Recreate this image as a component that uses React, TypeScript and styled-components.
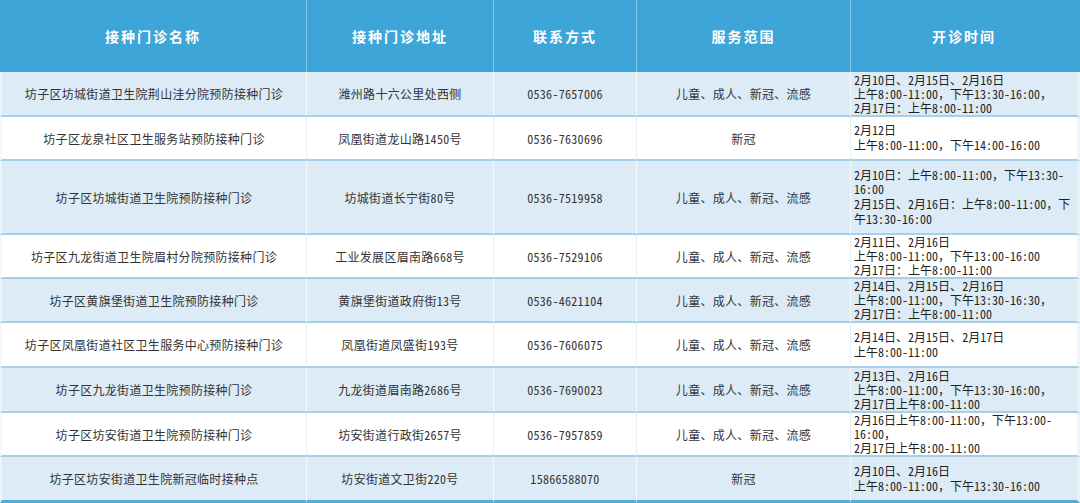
import React from "react";
import styled, { createGlobalStyle } from "styled-components";

const GlobalStyle = createGlobalStyle`
  html, body {
    margin: 0;
    padding: 0;
    background: #ffffff;
  }
  body {
    font-family: "Noto Sans CJK SC", "Noto Sans", sans-serif;
  }
`;

const Table = styled.table`
  width: 1080px;
  table-layout: fixed;
  border-collapse: separate;
  border-spacing: 0;
  font-family: "Noto Sans CJK SC", "Noto Sans", sans-serif;
`;

const Col = styled.col<{ $w: number }>`
  width: ${(p) => p.$w}px;
`;

const HeadRow = styled.tr`
  height: 72px;
`;

const HeadCell = styled.th`
  background: #3ea5d8;
  color: #ffffff;
  font-size: 14px;
  font-weight: 700;
  letter-spacing: 2px;
  text-align: center;
  vertical-align: middle;
  padding: 0;
  border-right: 1px solid #86c6e8;
  &:last-child {
    border-right: 3px solid #3ea5d8;
  }
`;

const Row = styled.tr<{ $h: number; $alt: boolean }>`
  height: ${(p) => p.$h}px;
  background: ${(p) => (p.$alt ? "#dcebf6" : "#ffffff")};
`;

const Cell = styled.td<{ $alt: boolean; $last: boolean }>`
  font-size: 12px;
  letter-spacing: 0.3px;
  color: #333333;
  text-align: center;
  vertical-align: middle;
  padding: 0 2px;
  white-space: nowrap;
  border-right: 1px solid ${(p) => (p.$alt ? "#f3f8fc" : "#e3edf4")};
  border-bottom: ${(p) => (p.$last ? "3px solid #56acd9" : "2px solid #a7cfe8")};
  &:first-child {
    border-left: 2px solid ${(p) => (p.$alt ? "#eaf4fa" : "#f3f8fb")};
  }
`;

const TimeCell = styled(Cell)`
  text-align: left;
  letter-spacing: 0;
  color: #1f1f1f;
  padding: 0 2px 0 3px;
  line-height: 14px;
  border-right: 3px solid ${(p) => (p.$alt ? "#e6f1f8" : "#eef5fa")};
`;

const Line = styled.div<{ $gap: boolean }>`
  display: block;
  line-height: ${(p) => (p.$gap ? "14.7px" : "14px")};
`;

const Half = styled.span`
  font-feature-settings: "hwid";
`;

function Mixed({ text }: { text: string }) {
  const parts = text.match(/[\x20-\x7e]+|[^\x20-\x7e]+/g) || [];
  return (
    <>
      {parts.map((p, i) =>
        /^[\x20-\x7e]+$/.test(p) ? <Half key={i}>{p}</Half> : <React.Fragment key={i}>{p}</React.Fragment>
      )}
    </>
  );
}

type Clinic = {
  name: string;
  address: string;
  phone: string;
  scope: string;
  times: string[];
  h: number;
};

const clinics: Clinic[] = [
  {
    name: "坊子区坊城街道卫生院荆山洼分院预防接种门诊",
    address: "潍州路十六公里处西侧",
    phone: "0536-7657006",
    scope: "儿童、成人、新冠、流感",
    times: ["2月10日、2月15日、2月16日", "上午8:00-11:00，下午13:30-16:00，", "2月17日：上午8:00-11:00"],
    h: 45,
  },
  {
    name: "坊子区龙泉社区卫生服务站预防接种门诊",
    address: "凤凰街道龙山路1450号",
    phone: "0536-7630696",
    scope: "新冠",
    times: ["2月12日", "上午8:00-11:00，下午14:00-16:00"],
    h: 44,
  },
  {
    name: "坊子区坊城街道卫生院预防接种门诊",
    address: "坊城街道长宁街80号",
    phone: "0536-7519958",
    scope: "儿童、成人、新冠、流感",
    times: ["2月10日：上午8:00-11:00，下午13:30-", "16:00", "2月15日、2月16日：上午8:00-11:00，下", "午13:30-16:00"],
    h: 74,
  },
  {
    name: "坊子区九龙街道卫生院眉村分院预防接种门诊",
    address: "工业发展区眉南路668号",
    phone: "0536-7529106",
    scope: "儿童、成人、新冠、流感",
    times: ["2月11日、2月16日", "上午8:00-11:00，下午13:00-16:00", "2月17日：上午8:00-11:00"],
    h: 44,
  },
  {
    name: "坊子区黄旗堡街道卫生院预防接种门诊",
    address: "黄旗堡街道政府街13号",
    phone: "0536-4621104",
    scope: "儿童、成人、新冠、流感",
    times: ["2月14日、2月15日、2月16日", "上午8:00-11:00，下午13:30-16:30，", "2月17日：上午8:00-11:00"],
    h: 44,
  },
  {
    name: "坊子区凤凰街道社区卫生服务中心预防接种门诊",
    address: "凤凰街道凤盛街193号",
    phone: "0536-7606075",
    scope: "儿童、成人、新冠、流感",
    times: ["2月14日、2月15日、2月17日", "上午8:00-11:00"],
    h: 45,
  },
  {
    name: "坊子区九龙街道卫生院预防接种门诊",
    address: "九龙街道眉南路2686号",
    phone: "0536-7690023",
    scope: "儿童、成人、新冠、流感",
    times: ["2月13日、2月16日", "上午8:00-11:00，下午13:30-16:00，", "2月17日上午8:00-11:00"],
    h: 45,
  },
  {
    name: "坊子区坊安街道卫生院预防接种门诊",
    address: "坊安街道行政街2657号",
    phone: "0536-7957859",
    scope: "儿童、成人、新冠、流感",
    times: ["2月16日上午8:00-11:00，下午13:00-", "16:00，", "2月17日上午8:00-11:00"],
    h: 44,
  },
  {
    name: "坊子区坊安街道卫生院新冠临时接种点",
    address: "坊安街道文卫街220号",
    phone: "15866588070",
    scope: "新冠",
    times: ["2月10日、2月16日", "上午8:00-11:00，下午13:30-16:00"],
    h: 46,
  },
];

const widths = [307, 187, 143, 214, 229];
const headers = ["接种门诊名称", "接种门诊地址", "联系方式", "服务范围", "开诊时间"];

export default function App() {
  return (
    <>
      <GlobalStyle />
      <Table>
        <colgroup>
          {widths.map((w, i) => (
            <Col key={i} $w={w} />
          ))}
        </colgroup>
        <thead>
          <HeadRow>
            {headers.map((h) => (
              <HeadCell key={h}>{h}</HeadCell>
            ))}
          </HeadRow>
        </thead>
        <tbody>
          {clinics.map((c, i) => {
            const alt = i % 2 === 0;
            const last = i === clinics.length - 1;
            const roomy = c.times.length * 14.7 + 2 <= c.h;
            return (
              <Row key={c.name} $h={c.h} $alt={alt}>
                <Cell $alt={alt} $last={last}>{c.name}</Cell>
                <Cell $alt={alt} $last={last}>
                  <Mixed text={c.address} />
                </Cell>
                <Cell $alt={alt} $last={last}>
                  <Mixed text={c.phone} />
                </Cell>
                <Cell $alt={alt} $last={last}>{c.scope}</Cell>
                <TimeCell $alt={alt} $last={last}>
                  {c.times.map((t, j) => (
                    <Line key={j} $gap={roomy}>
                      <Mixed text={t} />
                    </Line>
                  ))}
                </TimeCell>
              </Row>
            );
          })}
        </tbody>
      </Table>
    </>
  );
}
